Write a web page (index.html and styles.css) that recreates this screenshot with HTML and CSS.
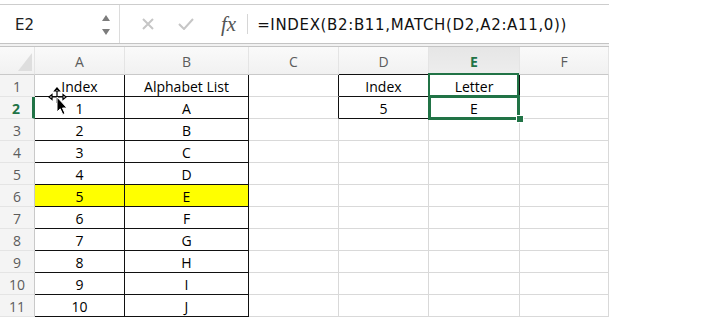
FILE: index.html
```html
<!DOCTYPE html>
<html lang="en">
<head>
    <meta charset="UTF-8">
    <title>INDEX MATCH</title>
    <link rel="stylesheet" href="styles.css">
</head>
<body>

<div class="bar">
    <div class="namebox">
        <span>E2</span>
        <span class="spin">
            <svg width="8" height="20" viewBox="0 0 8 20"><path d="M0 6 L4 0 L8 6 Z M0 14 L8 14 L4 20 Z" fill="#7c7c7c"/></svg>
        </span>
    </div>
    <svg class="ico-x" width="12" height="12" viewBox="0 0 12 12"><path d="M1 1 L11 11 M11 1 L1 11" stroke="#c6c6c6" stroke-width="2"/></svg>
    <svg class="ico-ok" width="16" height="12" viewBox="0 0 16 12"><path d="M1 6 L6 11 L15 1" stroke="#c6c6c6" stroke-width="2" fill="none"/></svg>
    <span class="fx">fx</span>
    <span class="sep"></span>
    <span class="formula">=INDEX(B2:B11,MATCH(D2,A2:A11,0))</span>
</div>
<div class="split"></div>

<div class="sheet">
    <div class="hd corner"></div>
    <div class="hd">A</div>
    <div class="hd">B</div>
    <div class="hd">C</div>
    <div class="hd bk-b">D</div>
    <div class="hd act">E</div>
    <div class="hd">F</div>

    <div class="rh">1</div>
    <div class="c bk">Index</div>
    <div class="c bk">Alphabet List</div>
    <div class="c bk-r"></div>
    <div class="c bk">Index</div>
    <div class="c bk sel1">Letter</div>
    <div class="c"></div>

    <div class="rh act">2</div>
    <div class="c bk">1</div>
    <div class="c bk">A</div>
    <div class="c bk-r"></div>
    <div class="c bk">5</div>
    <div class="c bk sel2">E</div>
    <div class="c"></div>

    <div class="rh">3</div>
    <div class="c bk">2</div>
    <div class="c bk">B</div>
    <div class="c"></div>
    <div class="c"></div>
    <div class="c"></div>
    <div class="c"></div>

    <div class="rh">4</div>
    <div class="c bk">3</div>
    <div class="c bk">C</div>
    <div class="c"></div>
    <div class="c"></div>
    <div class="c"></div>
    <div class="c"></div>

    <div class="rh">5</div>
    <div class="c bk">4</div>
    <div class="c bk">D</div>
    <div class="c"></div>
    <div class="c"></div>
    <div class="c"></div>
    <div class="c"></div>

    <div class="rh">6</div>
    <div class="c bk yel">5</div>
    <div class="c bk yel">E</div>
    <div class="c"></div>
    <div class="c"></div>
    <div class="c"></div>
    <div class="c"></div>

    <div class="rh">7</div>
    <div class="c bk">6</div>
    <div class="c bk">F</div>
    <div class="c"></div>
    <div class="c"></div>
    <div class="c"></div>
    <div class="c"></div>

    <div class="rh">8</div>
    <div class="c bk">7</div>
    <div class="c bk">G</div>
    <div class="c"></div>
    <div class="c"></div>
    <div class="c"></div>
    <div class="c"></div>

    <div class="rh">9</div>
    <div class="c bk">8</div>
    <div class="c bk">H</div>
    <div class="c"></div>
    <div class="c"></div>
    <div class="c"></div>
    <div class="c"></div>

    <div class="rh">10</div>
    <div class="c bk">9</div>
    <div class="c bk">I</div>
    <div class="c"></div>
    <div class="c"></div>
    <div class="c"></div>
    <div class="c"></div>

    <div class="rh">11</div>
    <div class="c bk">10</div>
    <div class="c bk">J</div>
    <div class="c"></div>
    <div class="c"></div>
    <div class="c"></div>
    <div class="c"></div>
</div>

<!-- mouse pointer over A1 -->
<svg class="pointer" width="24" height="30" viewBox="0 0 24 30">
    <g stroke="#000" stroke-width="1.2" fill="#fff">
        <path d="M3 11 L20 11 M11 2 L11 17"/>
        <path d="M3 11 L6 8.5 L6 13.5 Z M20 11 L17 8.5 L17 13.5 Z M11 2 L8.5 5 L13.5 5 Z"/>
    </g>
    <path d="M11 11 L11 26 L14.2 22.8 L16.8 28.5 L19 27.5 L16.5 22 L21 22 Z" fill="#000" stroke="#fff" stroke-width="1"/>
</svg>

</body>
</html>
```

FILE: styles.css
```css
html {
    background-color: white;
}
body {
    margin: 0;
    position: relative;
    font-family: "Open Sans", sans-serif;
    color: #000;
}
.bar {
    width: 609px;
    margin-top: 4px;
    height: 38px;
    box-sizing: content-box;
    border-top: 1px solid #cdcdcd;
    border-bottom: 1px solid #c4c4c4;
    display: flex;
    align-items: center;
}
.namebox {
    width: 120px;
    height: 100%;
    box-sizing: border-box;
    border-right: 1px solid #dcdcdc;
    display: flex;
    align-items: center;
    justify-content: space-between;
    padding: 2px 9px 0 15px;
    font-family: "DejaVu Sans", sans-serif;
    font-size: 15px;
    color: #222;
}
.spin {
    display: flex;
}
.ico-x {
    margin-left: 22px;
}
.ico-ok {
    margin-left: 24px;
}
.fx {
    margin-left: 27px;
    font-family: "Liberation Serif", serif;
    font-style: italic;
    font-size: 21px;
    color: #555;
    line-height: 1;
}
.sep {
    margin-left: 11px;
    width: 1px;
    height: 20px;
    background-color: #d6d6d6;
}
.formula {
    margin-left: 9px;
    padding-top: 2px;
    font-family: "DejaVu Sans", sans-serif;
    font-size: 15px;
    letter-spacing: 0.65px;
    color: #111;
}
.split {
    width: 609px;
    height: 2px;
    background-color: #f1f1f1;
    border-bottom: 1px solid #c4c4c4;
}

.sheet {
    display: grid;
    width: 609px;
    grid-template-columns: 35px 90px 124px 90px 90px 91px 89px;
    grid-template-rows: 28px repeat(11, 22px);
    font-size: 14px;
}
.sheet > div {
    box-sizing: border-box;
    border-right: 1px solid #d9d9d9;
    border-bottom: 1px solid #d9d9d9;
    display: flex;
    align-items: center;
    justify-content: center;
    padding-top: 1px;
}
.hd, .rh {
    background: linear-gradient(#fafafa, #f1f1f1);
    color: #5c5c5c;
}
.sheet > .hd {
    border-bottom-color: #c9c9c9;
    border-right-color: #e4e4e4;
}
.sheet > .rh {
    border-right-color: #c9c9c9;
    border-bottom-color: #e4e4e4;
    background: #f4f4f4;
}
.corner {
    position: relative;
}
.corner::after {
    content: "";
    position: absolute;
    right: 2px;
    bottom: 3px;
    border-style: solid;
    border-width: 0 0 18px 14px;
    border-color: transparent transparent #dedede transparent;
}
.hd.act {
    background: linear-gradient(#e6e6e6, #ededed);
    color: #217346;
    font-weight: bold;
}
.sheet > .rh.act {
    color: #217346;
    font-weight: bold;
    border-right: 3px solid #217346;
}
.sheet > .bk {
    border-right-color: #111;
    border-bottom-color: #111;
}
.sheet > .bk-r {
    border-right-color: #111;
}
.sheet > .bk-b {
    border-bottom-color: #111;
}
.yel {
    background-color: #ffff00;
}

/* selection outlines */
.sel1, .sel2 {
    position: relative;
    z-index: 1;
}
.sel1::after {
    content: "";
    position: absolute;
    top: -2px;
    left: -1px;
    right: 0;
    bottom: 0;
    border: 2px solid #217346;
    border-bottom: none;
}
.sel2::after {
    content: "";
    position: absolute;
    top: -2px;
    left: -1px;
    right: -1px;
    bottom: -2px;
    border: 3px solid #217346;
}
.sel2::before {
    content: "";
    position: absolute;
    right: -5px;
    bottom: -5px;
    width: 6px;
    height: 6px;
    background-color: #217346;
    border: 1px solid white;
    z-index: 2;
}

.pointer {
    position: absolute;
    left: 46px;
    top: 86px;
    z-index: 3;
}
```
